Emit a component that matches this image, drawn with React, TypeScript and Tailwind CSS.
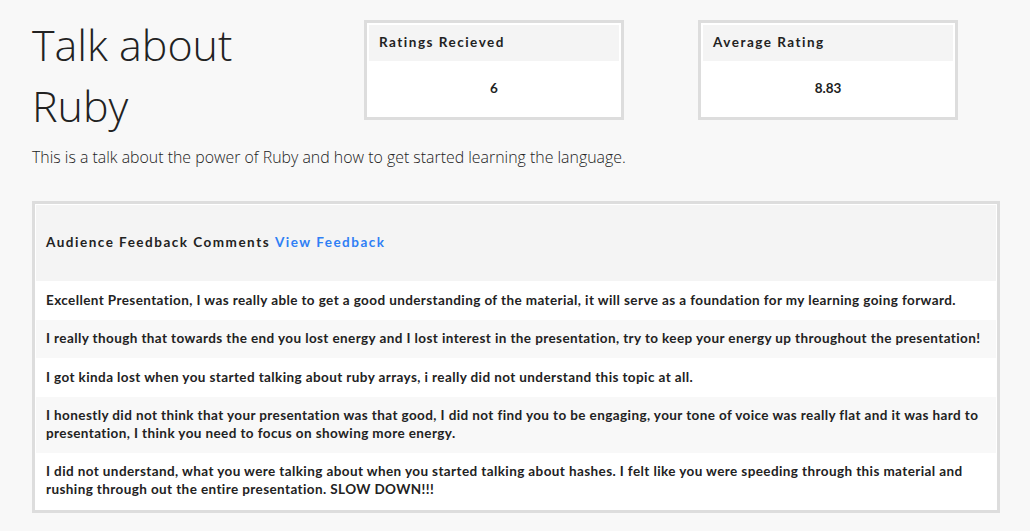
import React from 'react';

const comments = [
  'Excellent Presentation, I was really able to get a good understanding of the material, it will serve as a foundation for my learning going forward.',
  'I really though that towards the end you lost energy and I lost interest in the presentation, try to keep your energy up throughout the presentation!',
  'I got kinda lost when you started talking about ruby arrays, i really did not understand this topic at all.',
  'I honestly did not think that your presentation was that good, I did not find you to be engaging, your tone of voice was really flat and it was hard to presentation, I think you need to focus on showing more energy.',
  'I did not understand, what you were talking about when you started talking about hashes. I felt like you were speeding through this material and rushing through out the entire presentation. SLOW DOWN!!!',
];

const StatCard: React.FC<{ title: string; value: string }> = ({ title, value }) => (
  <div className="w-[260px] h-[100px] border-[3px] border-[#dddddd] bg-white p-[2px]">
    <div className="h-[36px] bg-[#f4f4f4] px-[10px] pb-[2px] flex items-center text-[13.5px] font-bold tracking-[1.5px] text-[#222]">
      {title}
    </div>
    <div className="h-[54px] flex items-center justify-center text-[13.5px] font-bold text-[#222]">
      {value}
    </div>
  </div>
);

export default function App() {
  return (
    <div className="min-h-screen bg-[#f8f8f8] px-[32px] pt-[14px] font-['Lato',sans-serif]">
      <div className="flex items-start">
        <h1 className="w-[332px] text-[43px] leading-[61px] font-light text-[#222] font-['Open_Sans',sans-serif]">
          Talk about
          <br />
          Ruby
        </h1>
        <div className="mt-[6px]">
          <StatCard title="Ratings Recieved" value="6" />
        </div>
        <div className="mt-[6px] ml-[74px]">
          <StatCard title="Average Rating" value="8.83" />
        </div>
      </div>
      <p className="mt-[8px] text-[15.9px] leading-[26px] font-light text-[#222] font-['Open_Sans',sans-serif]">
        This is a talk about the power of Ruby and how to get started learning the language.
      </p>
      <div className="mt-[31px] w-[968px] border-[3px] border-[#dddddd] bg-white p-[1px]">
        <div className="h-[76px] bg-[#f4f4f4] px-[10px] pb-[2px] flex items-center text-[13.5px] font-bold tracking-[1.5px] text-[#222]">
          Audience Feedback Comments&nbsp;<span className="text-[#2f7ff5]">View Feedback</span>
        </div>
        {comments.map((c, i) => (
          <div
            key={i}
            className={`px-[10px] py-[10.5px] text-[13.5px] leading-[17.5px] font-bold tracking-[0.4px] text-[#222] ${
              i % 2 === 1 ? 'bg-[#f8f8f8]' : 'bg-white'
            }`}
          >
            {c}
          </div>
        ))}
      </div>
    </div>
  );
}
